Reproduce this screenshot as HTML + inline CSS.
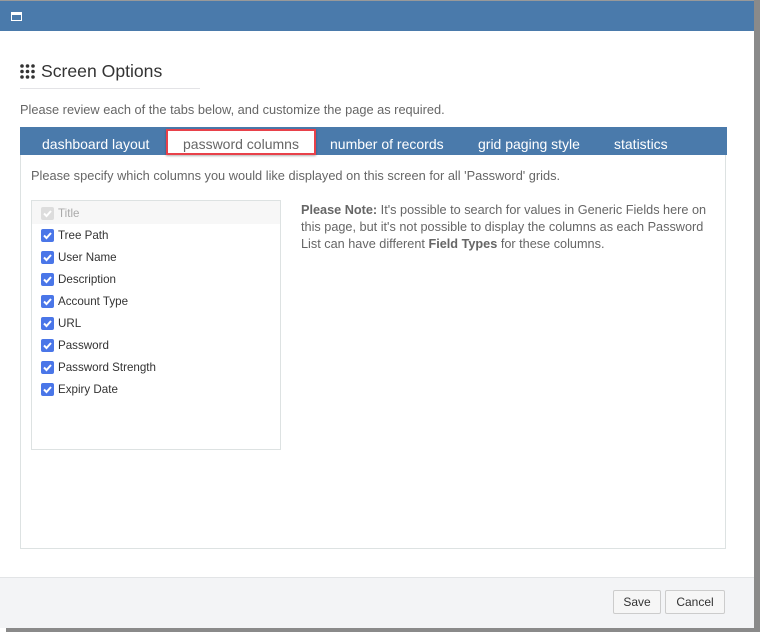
<!DOCTYPE html>
<html><head><meta charset="utf-8"><style>
*{margin:0;padding:0;box-sizing:border-box}
body{width:760px;height:632px;background:#fff;position:relative;overflow:hidden;font-family:"Liberation Sans",sans-serif;color:#555;font-size:12px}
.a{position:absolute;white-space:nowrap}
.cb{position:absolute;left:41px;width:13px;height:13px;border-radius:2px;background:#4a76e8}
.cb svg{position:absolute;left:1px;top:1px}
.lbl{position:absolute;left:58px;color:#333;font-size:11.6px}
</style></head><body>
<div class="a" style="left:0;top:0;width:755px;height:31px;background:#4a7aab;border-top:1px solid #999"></div>
<div class="a" style="left:11px;top:12px;width:11px;height:9px;border:1.5px solid #fff;border-top-width:3px"></div>
<div class="a" style="left:754px;top:0;width:6px;height:632px;background:#8a8a8a"></div>
<div class="a" style="left:6px;top:628px;width:754px;height:4px;background:#8a8a8a"></div>
<div class="a" style="left:0;top:577px;width:754px;height:51px;background:#f3f4f6;border-top:1px solid #e2e4e6"></div>
<svg class="a" style="left:20px;top:64px" width="17" height="15"><g fill="#333"><circle cx="2" cy="2" r="1.8"/><circle cx="7.5" cy="2" r="1.8"/><circle cx="13" cy="2" r="1.8"/><circle cx="2" cy="7.5" r="1.8"/><circle cx="7.5" cy="7.5" r="1.8"/><circle cx="13" cy="7.5" r="1.8"/><circle cx="2" cy="13" r="1.8"/><circle cx="7.5" cy="13" r="1.8"/><circle cx="13" cy="13" r="1.8"/></g></svg>
<div class="a" style="left:41px;top:61px;font-size:17.6px;color:#333">Screen Options</div>
<div class="a" style="left:20px;top:88px;width:180px;height:1px;background:#e3e3e6"></div>
<div class="a" style="left:20px;top:102px;font-size:12.8px;color:#666">Please review each of the tabs below, and customize the page as required.</div>
<div class="a" style="left:20px;top:127px;width:707px;height:28px;background:#4a7aab"></div>
<div class="a" style="left:20px;top:155px;width:706px;height:394px;border:1px solid #dde2e2;border-top:none"></div>
<div class="a" style="left:42px;top:136px;font-size:14px;color:#fff">dashboard layout</div>
<div class="a" style="left:166px;top:129px;width:150px;height:26px;background:#fff;border:2px solid #e8414a;box-shadow:0 1px 2px rgba(0,0,0,.3)"></div>
<div class="a" style="left:183px;top:136px;font-size:14px;color:#666">password columns</div>
<div class="a" style="left:330px;top:136px;font-size:14px;color:#fff">number of records</div>
<div class="a" style="left:478px;top:136px;font-size:14px;color:#fff">grid paging style</div>
<div class="a" style="left:614px;top:136px;font-size:14px;color:#fff">statistics</div>
<div class="a" style="left:31px;top:168px;font-size:12.8px;color:#666">Please specify which columns you would like displayed on this screen for all 'Password' grids.</div>
<div class="a" style="left:31px;top:200px;width:250px;height:250px;border:1px solid #dde2e2"></div>
<div class="a" style="left:32px;top:201px;width:248px;height:23px;background:#f7f7f7"></div>
<div class="cb" style="top:207px;background:#ddd"><svg width="11" height="11"><path d="M2 5.5l2.5 2.5 4.5-5" stroke="#fff" stroke-width="2" fill="none"/></svg></div>
<div class="lbl" style="top:207px;color:#aaa">Title</div>
<div class="cb" style="top:229px"><svg width="11" height="11"><path d="M2 5.5l2.5 2.5 4.5-5" stroke="#fff" stroke-width="2" fill="none"/></svg></div><div class="lbl" style="top:229px">Tree Path</div>
<div class="cb" style="top:251px"><svg width="11" height="11"><path d="M2 5.5l2.5 2.5 4.5-5" stroke="#fff" stroke-width="2" fill="none"/></svg></div><div class="lbl" style="top:251px">User Name</div>
<div class="cb" style="top:273px"><svg width="11" height="11"><path d="M2 5.5l2.5 2.5 4.5-5" stroke="#fff" stroke-width="2" fill="none"/></svg></div><div class="lbl" style="top:273px">Description</div>
<div class="cb" style="top:295px"><svg width="11" height="11"><path d="M2 5.5l2.5 2.5 4.5-5" stroke="#fff" stroke-width="2" fill="none"/></svg></div><div class="lbl" style="top:295px">Account Type</div>
<div class="cb" style="top:317px"><svg width="11" height="11"><path d="M2 5.5l2.5 2.5 4.5-5" stroke="#fff" stroke-width="2" fill="none"/></svg></div><div class="lbl" style="top:317px">URL</div>
<div class="cb" style="top:339px"><svg width="11" height="11"><path d="M2 5.5l2.5 2.5 4.5-5" stroke="#fff" stroke-width="2" fill="none"/></svg></div><div class="lbl" style="top:339px">Password</div>
<div class="cb" style="top:361px"><svg width="11" height="11"><path d="M2 5.5l2.5 2.5 4.5-5" stroke="#fff" stroke-width="2" fill="none"/></svg></div><div class="lbl" style="top:361px">Password Strength</div>
<div class="cb" style="top:383px"><svg width="11" height="11"><path d="M2 5.5l2.5 2.5 4.5-5" stroke="#fff" stroke-width="2" fill="none"/></svg></div><div class="lbl" style="top:383px">Expiry Date</div>
<div class="a" style="left:301px;top:202px;font-size:12.7px;color:#666;line-height:17px;white-space:nowrap"><b>Please Note:</b> It's possible to search for values in Generic Fields here on<br>this page, but it's not possible to display the columns as each Password<br>List can have different <b>Field Types</b> for these columns.</div>
<div class="a" style="left:613px;top:590px;width:48px;height:24px;border:1px solid #ccc;border-radius:2px;background:#f6f6f6;font-size:12px;color:#333;text-align:center;line-height:22px">Save</div>
<div class="a" style="left:665px;top:590px;width:60px;height:24px;border:1px solid #ccc;border-radius:2px;background:#f6f6f6;font-size:12px;color:#333;text-align:center;line-height:22px">Cancel</div>
</body></html>
